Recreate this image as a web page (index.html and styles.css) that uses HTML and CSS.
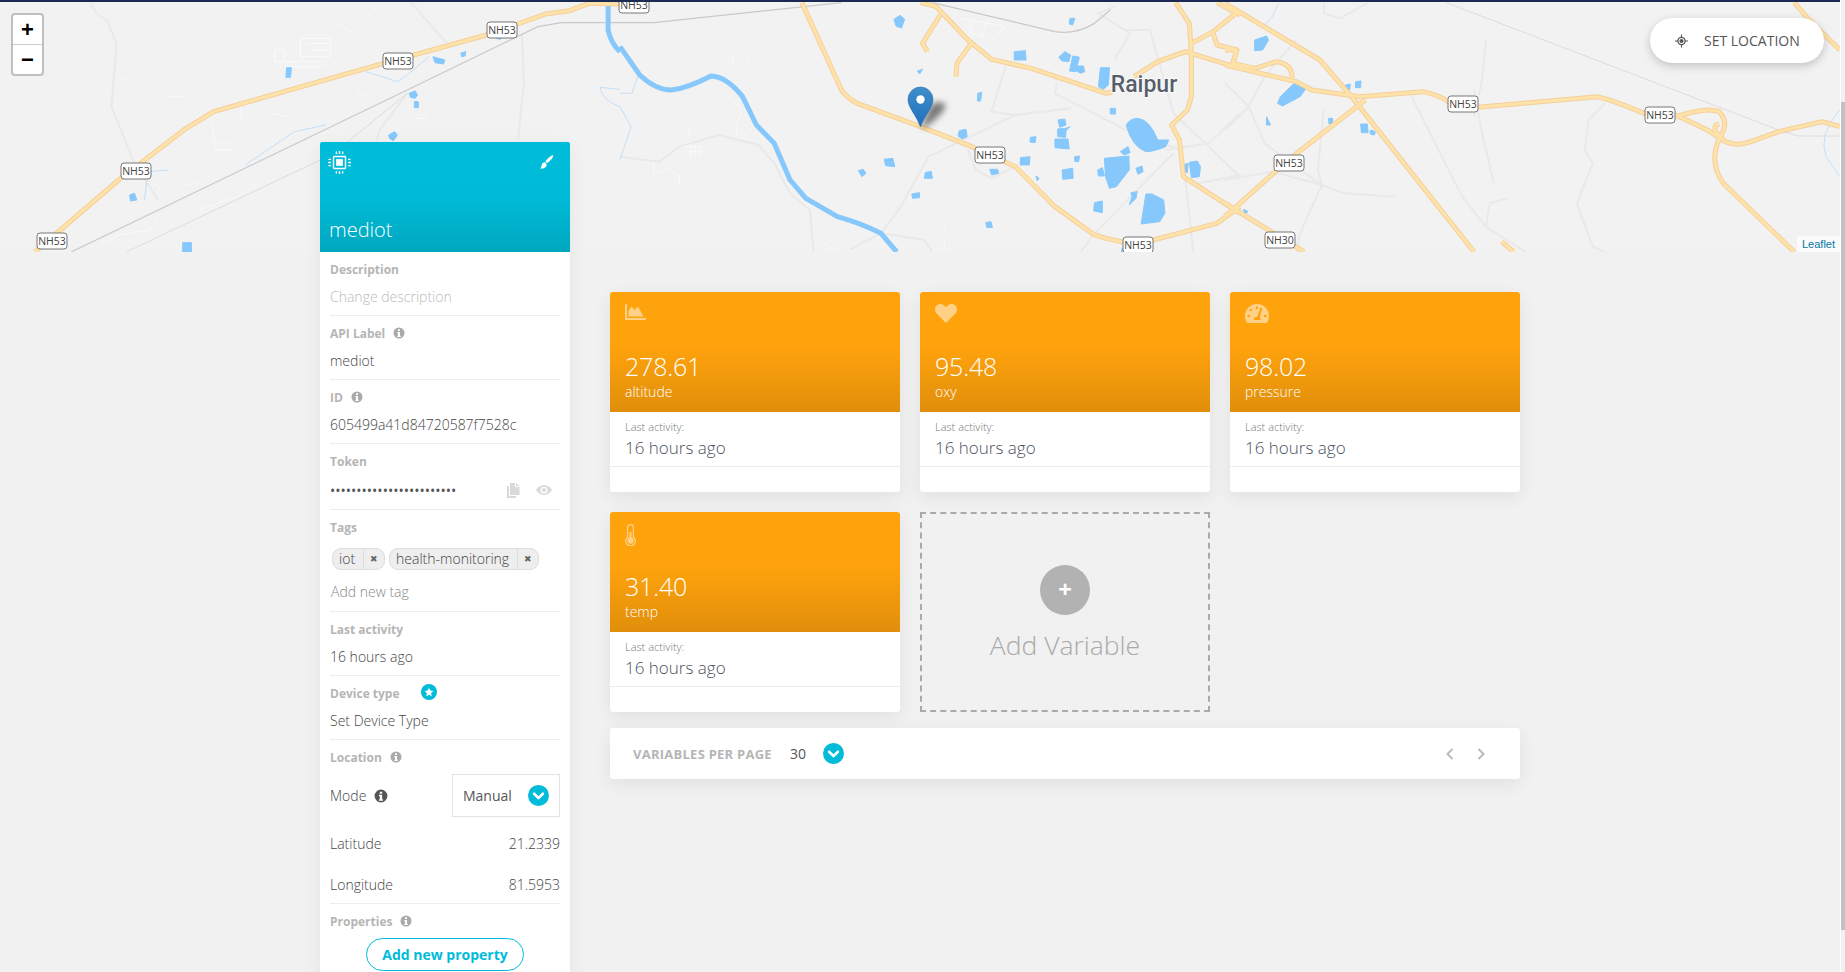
FILE: index.html
```html
<!DOCTYPE html>
<html lang="en">
<head>
    <meta charset="UTF-8">
    <meta name="viewport" content="width=device-width, initial-scale=1.0">
    <title>mediot</title>
    <link rel="stylesheet" href="styles.css">
</head>
<body>

<!-- Shared icons -->
<svg class="icon-defs" aria-hidden="true">
    <symbol id="i-info" viewBox="0 0 24 24">
        <path fill-rule="evenodd" d="M12 1a11 11 0 1 0 0 22a11 11 0 0 0 0-22zM10 4.500h4v3.500h-4zM8.500 10h5.500v7.500h1.500v2.500h-7v-2.500h1.500v-5h-1.500z"/>
    </symbol>
    <symbol id="i-chevron" viewBox="0 0 24 24">
        <circle cx="12" cy="12" r="12" fill="#00bcd9"/>
        <path d="M7 10l5 5 5-5" fill="none" stroke="#fff" stroke-width="3" stroke-linecap="round" stroke-linejoin="round"/>
    </symbol>
    <g id="map-roads">
        <g transform="scale(.3954 .3333)">
            <path d="M88 756L300 540L465 390L540 335L970 190L1230 105L1380 42L1440 32L1490 10L1568 12"/>
        </g>
        <g transform="translate(620 0) scale(.3954 .3333)">
            <path d="M460 8L560 270Q575 295 600 310L760 380L890 440L1000 500L1100 620L1200 705Q1250 725 1310 732L1510 670L1568 620"/>
            <path d="M760 8L800 20L880 120L940 178L1040 205L1230 280L1245 276"/>
            <path d="M810 45L765 130L778 155"/>
            <path d="M888 130L852 190L850 230"/>
            <path d="M1405 8L1440 70L1445 160L1445 290L1435 330L1395 375L1415 420L1425 530L1568 640"/>
            <path d="M1300 230L1360 185L1430 155L1568 205"/>
            <path d="M1445 130L1500 95L1568 30"/>
            <path d="M1510 8L1568 45"/>
            <path d="M1500 100L1510 135L1560 150L1550 190"/>
        </g>
        <g transform="translate(1225 0) scale(.3954 .3333)">
            <path d="M0 10L240 180L320 290L630 756"/>
            <path d="M0 195L180 245L220 270L340 290L500 275Q540 285 565 305L640 322L940 290Q970 295 1060 340L1140 345L1220 390L1265 425Q1295 440 1330 425L1400 395L1510 365L1555 380"/>
            <path d="M355 300L160 480L0 650"/>
            <path d="M1140 350Q1220 320 1250 335Q1275 370 1255 405Q1220 480 1260 550L1440 756"/>
            <path d="M1250 372Q1235 375 1240 395L1262 420"/>
            <path d="M1440 8L1470 50L1555 150"/>
            <path d="M0 610L200 756"/>
            <path d="M0 150L30 150L20 190L75 205L130 185Q170 190 170 235"/>
            <path d="M700 725L730 756"/>
        </g>
    </g>
</svg>

<div class="topbar"></div>

<!-- Map -->
<div class="map">
    <svg class="map-canvas" viewBox="0 2 1840 250">
        <!-- thin white tracks and minor roads -->
        <g class="minor" transform="scale(.3954 .3333)">
            <path d="M230 8Q235 40 270 60L295 130L282 320L340 490L400 600"/>
            <path d="M1040 8L1130 130"/>
            <path d="M1320 100L1325 250L1310 420"/>
            <path d="M1030 280L960 390L930 510"/>
        </g>
        <g class="minor" transform="translate(620 0) scale(.3954 .3333)">
            <path d="M0 470L100 485L150 440L250 405L350 435L390 490L430 580L480 630L490 756"/>
            <path d="M660 700L710 620L780 470L850 430L1000 345L1140 325"/>
            <path d="M975 200L940 335L1000 345"/>
            <path d="M1105 250L1100 280L1280 390L1420 450"/>
            <path d="M1280 90L1340 90L1400 340L1568 530"/>
            <path d="M1250 20L1210 40L1290 100L1250 180"/>
            <path d="M880 450L900 510L940 535L1000 500"/>
            <path d="M1400 460L1200 700L1165 756"/>
            <path d="M1430 540L1450 756"/>
            <path d="M1465 550L1568 525"/>
            <path d="M1568 340L1490 430L1380 450"/>
            <path d="M580 750L660 700L770 720L790 756"/>
        </g>
        <g class="minor" transform="translate(1225 0) scale(.3954 .3333)">
            <path d="M250 8L250 40L290 55L360 10"/>
            <path d="M0 250L60 320L0 390"/>
            <path d="M250 325L235 510L245 555L190 700L180 756"/>
            <path d="M0 540L120 515L245 555L300 580L430 590"/>
            <path d="M470 285L600 590L660 680L760 756"/>
            <path d="M630 270L650 400L680 550"/>
            <path d="M660 120L650 240L630 350"/>
            <path d="M960 310L920 360L910 450L930 490L890 610L930 740L960 756"/>
            <path d="M660 680L670 610L715 595"/>
            <path d="M180 120L100 230L60 320L100 430L250 560"/>
        </g>
        <g class="white-track" transform="scale(.3954 .3333)">
            <path d="M695 150H720V185H695ZM760 115H835V170H760ZM725 185H820V200H725ZM775 130H840M785 150H840"/>
            <path d="M535 360L545 450H585M545 428H590M610 320V360M685 340L730 350"/>
            <path d="M430 290H460L480 268M300 230L335 250M900 260L905 280L930 285M1045 355H1070L1085 330"/>
            <path d="M395 490L410 520M460 560L505 545M395 550L410 575M920 55L950 30M850 65L890 100"/>
            <path d="M260 730L300 705L380 690L400 650M500 630L600 590L660 545"/>
        </g>
        <g class="white-track" transform="translate(620 0) scale(.3954 .3333)">
            <path d="M160 440H215M170 455H210M180 440V475M190 440V470M200 440V470"/>
            <path d="M85 490V520L120 505L150 530V555M285 165V200M325 180V195M720 205L740 180"/>
            <path d="M255 275L310 330L295 370V410M310 410L330 385M175 385V410"/>
            <path d="M860 55L975 80L930 135M880 95L920 110M895 60L885 95M925 70L915 110"/>
            <path d="M985 640L1000 665M510 720L540 750M600 690L620 700M820 665V690M820 715V750"/>
        </g>

        <!-- railway lines -->
        <g class="rail" transform="scale(.3954 .3333)">
            <path d="M180 756L1030 270L1360 80L1420 68H1568"/>
        </g>
        <g class="rail-soft" transform="scale(.3954 .3333)">
            <path d="M320 756L810 480"/>
            <path d="M880 425L1030 280"/>
        </g>
        <g class="rail" transform="translate(620 0) scale(.3954 .3333)">
            <path d="M0 68H85L560 8"/>
            <path d="M790 8L1100 95Q1150 105 1200 70L1240 30"/>
        </g>
        <g class="rail-soft" transform="translate(1225 0) scale(.3954 .3333)">
            <path d="M560 8L1400 390L1450 408H1555"/>
        </g>

        <!-- thin streams -->
        <g class="stream" transform="scale(.3954 .3333)">
            <path d="M925 215L1005 245L1030 225L1085 170"/>
            <path d="M620 495L745 395L825 375"/>
            <path d="M365 600L375 515L425 510"/>
            <path d="M1568 320Q1520 300 1518 262L1568 268"/>
        </g>
        <g class="stream" transform="translate(620 0) scale(.3954 .3333)">
            <path d="M0 320L28 380L0 480"/>
            <path d="M45 230L30 280H0"/>
        </g>
        <g class="stream" transform="translate(1225 0) scale(.3954 .3333)">
            <path d="M1555 330Q1500 400 1520 470L1555 530"/>
            <path d="M135 10L120 50L100 75"/>
        </g>

        <!-- main river -->
        <g class="river" transform="scale(.3954 .3333)">
            <path d="M1538 8L1538 90Q1545 130 1568 155"/>
        </g>
        <g class="river" transform="translate(620 0) scale(.3954 .3333)">
            <path d="M0 140L50 225Q90 270 130 270Q170 265 230 228Q270 230 310 290L345 375L390 430L430 540L470 595L550 650Q610 670 660 700L700 756"/>
        </g>

        <!-- lakes and ponds -->
        <g class="water" transform="scale(.3954 .3333)">
            <path d="M725 203H737L735 232H723Z"/>
            <path d="M1095 170L1125 180L1122 192L1100 188Z"/>
            <path d="M1165 160L1178 155L1176 168L1168 170Z"/>
            <path d="M1035 280L1050 273L1056 285L1050 295L1038 292Z"/>
            <path d="M1048 305H1058V323H1048Z"/>
            <path d="M983 405L998 395L1005 405L995 422L985 415Z"/>
            <path d="M328 585L340 580L346 600L330 603Z"/>
            <path d="M462 728H484V756H462Z"/>
            <path d="M1255 105H1272L1265 118L1255 115Z"/>
        </g>
        <g class="water" transform="translate(620 0) scale(.3954 .3333)">
            <path d="M693 58L708 46L720 58L712 84L698 78Z"/>
            <path d="M997 155L1025 152L1027 180L997 180Z"/>
            <path d="M1110 172L1125 155L1140 165L1135 185L1118 183Z"/>
            <path d="M1145 168L1162 172L1152 215L1137 213Z"/>
            <path d="M1155 198H1172L1175 215L1165 220L1153 212Z"/>
            <path d="M1138 55H1150L1145 75L1136 72Z"/>
            <path d="M1215 203H1238L1235 255L1222 268L1210 260Z"/>
            <path d="M905 280L915 277L912 303H904Z"/>
            <path d="M752 213L765 208L758 222Z"/>
            <path d="M1240 325H1253V342H1240Z"/>
            <path d="M1108 360L1125 357L1128 375L1112 382Z"/>
            <path d="M1107 387L1128 385L1138 380L1128 392L1127 412L1107 410Z"/>
            <path d="M1100 417H1133L1136 447L1100 443Z"/>
            <path d="M1038 412L1052 410L1050 428L1037 426Z"/>
            <path d="M858 392L875 388L878 410L865 417L855 408Z"/>
            <path d="M1280 375Q1290 355 1310 355Q1340 360 1360 420L1388 420L1380 440Q1350 455 1330 455Q1295 440 1280 375Z"/>
            <path d="M1265 455L1285 440L1290 458L1275 465Z"/>
            <path d="M1225 475L1287 468L1288 510L1255 560L1238 565L1228 530Z"/>
            <path d="M1208 510L1220 503L1225 528L1210 528Z"/>
            <path d="M1305 505L1320 498L1323 515L1310 523Z"/>
            <path d="M1150 470L1162 468L1160 485L1150 484Z"/>
            <path d="M1013 473L1037 470L1035 495L1012 495Z"/>
            <path d="M935 508H955L958 520L940 525Z"/>
            <path d="M1118 510L1145 505L1146 535L1120 538Z"/>
            <path d="M1052 528L1060 535L1055 542Z"/>
            <path d="M668 478L690 475L695 500L672 497Z"/>
            <path d="M603 512L615 508L622 520L612 530Z"/>
            <path d="M772 518L787 514L790 535H770Z"/>
            <path d="M738 582L757 578L758 593L740 595Z"/>
            <path d="M925 668L938 665L942 682L928 683Z"/>
            <path d="M1200 608L1220 603V638L1198 633Z"/>
            <path d="M1292 578L1308 575L1305 595L1288 615L1295 590Z"/>
            <path d="M1330 582H1345L1375 600L1378 640L1365 665L1318 672Z"/>
            <path d="M1425 495L1437 490L1435 518L1427 515Z"/>
            <path d="M1440 487L1460 483L1468 500L1465 530L1445 533Z"/>
            <path d="M1270 745H1290L1285 756H1268Z"/>
        </g>
        <g class="water" transform="translate(1225 0) scale(.3954 .3333)">
            <path d="M75 120L105 108L110 120L95 150L75 152Z"/>
            <path d="M140 290L175 250L205 265L190 290L145 318L133 310Z"/>
            <path d="M305 255L317 253L315 270L307 270Z"/>
            <path d="M330 245L344 243L343 263H330Z"/>
            <path d="M105 350L115 375H105Z"/>
            <path d="M262 355H272V372H263Z"/>
            <path d="M343 372H360L362 398H345Z"/>
            <path d="M368 390L380 395L378 405L367 402Z"/>
            <path d="M47 628L58 635L50 642Z"/>
        </g>

        <!-- highways, drawn twice for the casing -->
        <use href="#map-roads" class="road-case"/>
        <use href="#map-roads" class="road-fill"/>

        <!-- highway shields -->
        <g class="shield"><rect x="37" y="233" width="30" height="16" rx="3"/><text x="52" y="245">NH53</text></g>
        <g class="shield"><rect x="121" y="163" width="30" height="16" rx="3"/><text x="136" y="175">NH53</text></g>
        <g class="shield"><rect x="383" y="53" width="30" height="16" rx="3"/><text x="398" y="65">NH53</text></g>
        <g class="shield"><rect x="487" y="22" width="30" height="16" rx="3"/><text x="502" y="34">NH53</text></g>
        <g class="shield"><rect x="619" y="-3" width="30" height="16" rx="3"/><text x="634" y="9">NH53</text></g>
        <g class="shield"><rect x="975" y="147" width="30" height="16" rx="3"/><text x="990" y="159">NH53</text></g>
        <g class="shield"><rect x="1123" y="237" width="30" height="16" rx="3"/><text x="1138" y="249">NH53</text></g>
        <g class="shield"><rect x="1274" y="155" width="30" height="16" rx="3"/><text x="1289" y="167">NH53</text></g>
        <g class="shield"><rect x="1265" y="232" width="30" height="16" rx="3"/><text x="1280" y="244">NH30</text></g>
        <g class="shield"><rect x="1448" y="96" width="30" height="16" rx="3"/><text x="1463" y="108">NH53</text></g>
        <g class="shield"><rect x="1645" y="107" width="30" height="16" rx="3"/><text x="1660" y="119">NH53</text></g>

        <text class="city" x="1144" y="92">Raipur</text>

        <!-- location marker with its shadow -->
        <defs>
            <linearGradient id="pin-grad" x1="0" y1="0" x2="0" y2="1">
                <stop offset="0" stop-color="#3f8fcb"/>
                <stop offset="1" stop-color="#1f6fbd"/>
            </linearGradient>
            <filter id="pin-blur" x="-60%" y="-60%" width="220%" height="220%">
                <feGaussianBlur stdDeviation="3"/>
            </filter>
        </defs>
        <path class="pin-shadow" d="M921 127L930 106Q940 98 946 106Q942 115 926 127Z" filter="url(#pin-blur)"/>
        <path d="M920.500 127C917 116 908 108 908 99.500A12.500 12.500 0 1 1 933 99.500C933 108 924 116 920.500 127Z" fill="url(#pin-grad)" stroke="#2a6ea8" stroke-width=".6"/>
        <circle cx="920.500" cy="99.500" r="4.200" fill="#fff"/>
    </svg>

    <div class="zoom-control">
        <div class="zoom-btn">+</div>
        <div class="zoom-btn">&minus;</div>
    </div>

    <div class="set-location">
        <svg class="set-location-icon" viewBox="0 0 24 24">
            <path fill="#555" d="M11 0h2v4.200a8 8 0 0 1 6.800 6.800H24v2h-4.200a8 8 0 0 1-6.800 6.800V24h-2v-4.200A8 8 0 0 1 4.200 13H0v-2h4.200A8 8 0 0 1 11 4.200zM12 6.500a5.500 5.500 0 1 0 0 11a5.500 5.500 0 0 0 0-11z"/>
            <circle cx="12" cy="12" r="3.800" fill="#555"/>
        </svg>
        SET LOCATION
    </div>

    <div class="attribution">Leaflet</div>
</div>

<div class="content">
    <!-- Device sidebar -->
    <aside class="device-card">
        <div class="device-head">
            <div class="device-icons">
                <svg class="chip-icon" viewBox="0 0 24 24" fill="#fff">
                    <path fill-rule="evenodd" d="M6.500 5h11A1.500 1.500 0 0 1 19 6.500v11a1.500 1.500 0 0 1-1.500 1.500h-11A1.500 1.500 0 0 1 5 17.500v-11A1.500 1.500 0 0 1 6.500 5zM6.500 6.500v11h11v-11z"/>
                    <rect x="8.500" y="8.500" width="7" height="7"/>
                    <path d="M8 0.500h1.500v2.500h-1.500zM11.250 0h1.500v3h-1.500zM14.500 0.500h1.500v2.500h-1.500zM8 21h1.500v2.500h-1.500zM11.250 21h1.500v3h-1.500zM14.500 21h1.500v2.500h-1.500zM0.500 8h2.500v1.500h-2.500zM0 11.250h3v1.500h-3zM0.500 14.500h2.500v1.500h-2.500zM21 8h2.500v1.500h-2.500zM21 11.250h3v1.500h-3zM21 14.500h2.500v1.500h-2.500z"/>
                </svg>
                <svg class="brush-icon" viewBox="0 0 16 17" fill="#fff">
                    <path d="M15.500 0.300c.5.500-.5 3-2.500 5.200c-1.500 1.700-3 3.200-4.300 3.900c-.4-1-1.100-1.700-2.100-2.100c.7-1.300 2.200-2.800 3.900-4.300c2.200-2 4.500-3.200 5-2.700zM5.800 8.200c1.300.3 2.200 1.300 2.400 2.500c.2 3-3 5-7.800 4.700c1.500-.8 1.700-1.800 1.900-3.200c.3-2.500 1.800-4 3.500-4z"/>
                </svg>
            </div>
            <div class="device-name">mediot</div>
        </div>

        <div class="field">
            <div class="field-label">Description</div>
            <div class="field-value placeholder">Change description</div>
        </div>
        <div class="field">
            <div class="field-label">API Label <svg class="info"><use href="#i-info"/></svg></div>
            <div class="field-value">mediot</div>
        </div>
        <div class="field">
            <div class="field-label">ID <svg class="info"><use href="#i-info"/></svg></div>
            <div class="field-value">605499a41d84720587f7528c</div>
        </div>
        <div class="field field-token">
            <div class="field-label">Token</div>
            <div class="token-row">
                <span class="token-dots">&bull;&bull;&bull;&bull;&bull;&bull;&bull;&bull;&bull;&bull;&bull;&bull;&bull;&bull;&bull;&bull;&bull;&bull;&bull;&bull;&bull;&bull;&bull;&bull;</span>
                <svg class="copy-icon" viewBox="0 0 14 15" fill="#d9d9d9">
                    <path d="M3 0h5v4h4.500v8H3zM9 0l3.500 3H9zM0 3h2v10h7v2H0z"/>
                </svg>
                <svg class="eye-icon" viewBox="0 0 16 10">
                    <path fill="#d9d9d9" fill-rule="evenodd" d="M8 0c3.500 0 6.300 2.200 8 5c-1.700 2.800-4.500 5-8 5s-6.300-2.200-8-5c1.700-2.800 4.500-5 8-5zM8 1.500a3.500 3.500 0 1 0 0 7a3.500 3.500 0 0 0 0-7z"/>
                    <circle cx="8" cy="5" r="2" fill="#d9d9d9"/>
                </svg>
            </div>
        </div>
        <div class="field field-tags">
            <div class="field-label">Tags</div>
            <div class="tag-list">
                <span class="tag"><span class="tag-text">iot</span><span class="tag-x">&#10006;</span></span>
                <span class="tag"><span class="tag-text">health-monitoring</span><span class="tag-x">&#10006;</span></span>
            </div>
            <div class="tag-input">Add new tag</div>
        </div>
        <div class="field">
            <div class="field-label">Last activity</div>
            <div class="field-value">16 hours ago</div>
        </div>
        <div class="field">
            <div class="field-label">Device type
                <svg class="star-badge" viewBox="0 0 24 24">
                    <circle cx="12" cy="12" r="12" fill="#00bcd9"/>
                    <path fill="#fff" d="M12 5.500l2 4.300 4.700.6-3.500 3.200.9 4.700-4.100-2.300-4.100 2.300.9-4.700-3.500-3.200 4.700-.6z"/>
                </svg>
            </div>
            <div class="field-value">Set Device Type</div>
        </div>
        <div class="field field-location">
            <div class="field-label">Location <svg class="info"><use href="#i-info"/></svg></div>
            <div class="loc-row">
                <span class="loc-mode">Mode <svg class="info info-dark"><use href="#i-info"/></svg></span>
                <div class="mode-select">Manual <svg class="select-chevron"><use href="#i-chevron"/></svg></div>
            </div>
            <div class="coord-row"><span>Latitude</span><span>21.2339</span></div>
            <div class="coord-row"><span>Longitude</span><span>81.5953</span></div>
        </div>
        <div class="field field-last">
            <div class="field-label">Properties <svg class="info"><use href="#i-info"/></svg></div>
            <button class="add-property">Add new property</button>
        </div>
    </aside>

    <!-- Variables -->
    <main class="variables">
        <div class="var-grid">
            <div class="var-card">
                <div class="var-head">
                    <svg class="var-icon" viewBox="0 0 21 16" width="21" height="16">
                        <path d="M0 0h2v14h19v2H0zM3.500 12.500V7l3-4.500 3 3.500 3.500-3.500 5.500 10z"/>
                    </svg>
                    <div class="var-value">278.61</div>
                    <div class="var-name">altitude</div>
                </div>
                <div class="var-body">
                    <div class="var-activity">Last activity:</div>
                    <div class="var-time">16 hours ago</div>
                </div>
            </div>
            <div class="var-card">
                <div class="var-head">
                    <svg class="var-icon" viewBox="0 0 22 19" width="22" height="19">
                        <path d="M11 19L1.800 9.800C-.6 7.400-.6 3.700 1.500 1.600C3.700-.5 7.300-.5 9.500 1.700L11 3.200L12.500 1.700C14.700-.5 18.300-.5 20.500 1.600C22.600 3.700 22.600 7.400 20.200 9.800z"/>
                    </svg>
                    <div class="var-value">95.48</div>
                    <div class="var-name">oxy</div>
                </div>
                <div class="var-body">
                    <div class="var-activity">Last activity:</div>
                    <div class="var-time">16 hours ago</div>
                </div>
            </div>
            <div class="var-card">
                <div class="var-head">
                    <svg class="var-icon" viewBox="0 0 24 19" width="24" height="19">
                        <path fill-rule="evenodd" d="M12 0C5.400 0 0 5.400 0 12c0 2.500.7 4.800 2 6.500q.4.500 1 .5h18q.6 0 1-.5c1.300-1.700 2-4 2-6.500C24 5.400 18.600 0 12 0zM11 2.500h2v2.500h-2zM5.500 4.500l1.700 1.500-1.400 1.500-1.600-1.600zM2.500 11h2.500v2h-2.500zM19 11h2.500v2H19zM15.500 3.500l1.700.6-2.400 9.400c.8.700 1 1.500 1 2.500H8.500c0-1.800 1.600-3.400 3.800-3.300z"/>
                    </svg>
                    <div class="var-value">98.02</div>
                    <div class="var-name">pressure</div>
                </div>
                <div class="var-body">
                    <div class="var-activity">Last activity:</div>
                    <div class="var-time">16 hours ago</div>
                </div>
            </div>
            <div class="var-card">
                <div class="var-head">
                    <svg class="var-icon" viewBox="0 0 11 22" width="11" height="22">
                        <path fill-rule="evenodd" d="M5.500 0A3.500 3.500 0 0 1 9 3.500v9.300a5.500 5.500 0 1 1-7 0V3.500A3.500 3.500 0 0 1 5.500 0zM5.500 1.200A2.300 2.300 0 0 0 3.200 3.500v9.900a4.300 4.300 0 1 0 4.600 0V3.500A2.300 2.300 0 0 0 5.500 1.200z"/>
                        <circle cx="5.500" cy="16.500" r="3.200"/>
                        <rect x="4.500" y="8" width="2" height="7"/>
                    </svg>
                    <div class="var-value">31.40</div>
                    <div class="var-name">temp</div>
                </div>
                <div class="var-body">
                    <div class="var-activity">Last activity:</div>
                    <div class="var-time">16 hours ago</div>
                </div>
            </div>
            <div class="add-var">
                <div class="add-var-btn">+</div>
                <div class="add-var-text">Add Variable</div>
            </div>
        </div>

        <div class="var-toolbar">
            <span class="per-page-label">VARIABLES PER PAGE</span>
            <span class="per-page-value">30</span>
            <svg class="per-page-chevron"><use href="#i-chevron"/></svg>
            <div class="pager">
                <svg viewBox="0 0 10 14" width="10" height="14"><path d="M7.500 2L2.500 7l5 5"/></svg>
                <svg viewBox="0 0 10 14" width="10" height="14"><path d="M2.500 2l5 5-5 5"/></svg>
            </div>
        </div>
    </main>
</div>

<div class="scrollbar"><div class="scrollbar-thumb"></div></div>

</body>
</html>
```

FILE: styles.css
```css
html, body {
    height: 100%;
    overflow: hidden;
}
body {
    margin: 0;
    background-color: #f1f1f1;
    font-family: "Open Sans", Arial, sans-serif;
    color: #555;
}
.icon-defs {
    display: none;
}
.topbar {
    height: 2px;
    background-color: #1a2a52;
}

/* Map */
.map {
    position: relative;
    width: 1840px;
    height: 250px;
    overflow: hidden;
    background-color: #f2f2f2;
}
.map-canvas {
    display: block;
    width: 1840px;
    height: 250px;
}
.map-canvas path,
#map-roads path {
    vector-effect: non-scaling-stroke;
}
.minor path {
    fill: none;
    stroke: #e9e9e9;
    stroke-width: 2;
}
.white-track path {
    fill: none;
    stroke: #fafafa;
    stroke-width: 1;
}
.rail path {
    fill: none;
    stroke: #c9c9c9;
    stroke-width: 1.300;
}
.rail-soft path {
    fill: none;
    stroke: #dcdcdc;
    stroke-width: 1;
}
.stream path {
    fill: none;
    stroke: #c4dff6;
    stroke-width: 1;
}
.river path {
    fill: none;
    stroke: #86c8fc;
    stroke-width: 5;
    stroke-linejoin: round;
}
.water path {
    fill: #86c8fc;
    stroke: #86c8fc;
    stroke-width: 1;
    stroke-linejoin: round;
}
.road-case,
.road-fill {
    fill: none;
    stroke-linejoin: round;
}
.road-case {
    stroke: #f5cf9c;
    stroke-width: 5;
}
.road-fill {
    stroke: #fde2a9;
    stroke-width: 3;
}
.shield rect {
    fill: #fff;
    stroke: #777;
    stroke-width: 1;
}
.shield text {
    font-family: "Open Sans", sans-serif;
    font-size: 10.500px;
    fill: #444;
    text-anchor: middle;
}
.city {
    font-family: Roboto, sans-serif;
    font-size: 23px;
    font-weight: 500;
    fill: #575e6b;
    stroke: #fff;
    stroke-width: 1.500px;
    paint-order: stroke;
    text-anchor: middle;
}
.pin-shadow {
    fill: rgba(0, 0, 0, 0.5);
}
.zoom-control {
    position: absolute;
    top: 11px;
    left: 11px;
    width: 29px;
    border: 2px solid rgba(0, 0, 0, 0.25);
    border-radius: 4px;
    background: #fff;
}
.zoom-btn {
    height: 29px;
    line-height: 29px;
    text-align: center;
    font-family: "Liberation Sans", Arial, sans-serif;
    font-size: 22px;
    font-weight: bold;
    color: #000;
}
.zoom-btn:first-child {
    border-bottom: 1px solid #ccc;
}
.set-location {
    position: absolute;
    top: 16px;
    left: 1650px;
    width: 174px;
    height: 45px;
    display: flex;
    align-items: center;
    padding-left: 25px;
    box-sizing: border-box;
    background: #fff;
    border-radius: 23px;
    box-shadow: 0 3px 10px rgba(0, 0, 0, 0.2);
    font-size: 14px;
    color: #555;
}
.set-location-icon {
    width: 13px;
    height: 14px;
    margin-right: 16px;
}
.attribution {
    position: absolute;
    right: 0;
    bottom: 0;
    padding: 0 5px;
    background: rgba(255, 255, 255, 0.7);
    font-family: "Liberation Sans", Arial, sans-serif;
    font-size: 11px;
    line-height: 16px;
    color: #0078a8;
}

/* Page below the map */
.content {
    display: flex;
    align-items: flex-start;
    padding-left: 320px;
}

/* Device sidebar */
.device-card {
    position: relative;
    width: 250px;
    margin-top: -110px;
    background: #fff;
    border-radius: 2px 2px 0 0;
    box-shadow: 0 5px 20px rgba(0, 0, 0, 0.06);
}
.device-head {
    height: 110px;
    display: flex;
    flex-direction: column;
    justify-content: space-between;
    padding: 9px 10px 9px 8px;
    box-sizing: border-box;
    background: linear-gradient(to bottom, #00bcd9 0%, #00bbd7 50%, #00a7bf 100%);
    border-radius: 2px 2px 0 0;
    color: #fff;
}
.device-icons {
    display: flex;
    justify-content: space-between;
    align-items: flex-start;
}
.chip-icon {
    width: 23px;
    height: 23px;
}
.brush-icon {
    width: 15px;
    height: 15px;
    margin-top: 4px;
    margin-right: 6px;
}
.device-name {
    padding-left: 1px;
    font-size: 20px;
    font-weight: 300;
    line-height: 26px;
}
.field {
    margin: 0 10px;
    padding: 8px 0;
    border-bottom: 1px solid #ececec;
}
.field-label {
    display: flex;
    align-items: center;
    height: 18px;
    font-size: 12px;
    font-weight: 700;
    color: #b5b5b5;
}
.info {
    width: 12px;
    height: 12px;
    margin-left: 8px;
    fill: #aaa;
}
.info-dark {
    fill: #555;
    width: 14px;
    height: 14px;
    margin-left: 8px;
}
.field-value {
    margin-top: 9px;
    font-size: 14px;
    font-weight: 300;
    line-height: 20px;
    color: #444;
}
.placeholder {
    color: #bbb;
}
.token-row {
    display: flex;
    align-items: center;
    height: 22px;
    margin-top: 9px;
}
.token-dots {
    flex: 1;
    font-size: 14px;
    color: #555;
}
.copy-icon {
    width: 14px;
    height: 15px;
    margin-right: 15px;
}
.eye-icon {
    width: 16px;
    height: 10px;
    margin-right: 8px;
}
.field-tags {
    padding-bottom: 9px;
}
.tag-list {
    display: flex;
    gap: 4px;
    margin: 12px 0 0 2px;
}
.tag {
    display: flex;
    height: 22px;
    background: #eee;
    border: 1px solid #ddd;
    border-radius: 9px;
    box-sizing: border-box;
    font-size: 14px;
    font-weight: 300;
    line-height: 20px;
    color: #444;
}
.tag-text {
    padding: 0 8px 0 6px;
    border-right: 1px solid #ddd;
}
.tag-x {
    width: 20px;
    font-size: 9px;
    text-align: center;
    color: #666;
}
.tag-input {
    margin: 12px 0 0 1px;
    font-size: 14px;
    font-weight: 300;
    line-height: 20px;
    color: #888;
}
.star-badge {
    width: 16px;
    height: 16px;
    margin-left: 21px;
    margin-top: -3px;
}
.loc-row {
    display: flex;
    align-items: center;
    justify-content: space-between;
    margin-top: 8px;
    font-size: 14px;
    font-weight: 300;
    color: #444;
}
.loc-mode {
    display: flex;
    align-items: center;
}
.mode-select {
    display: flex;
    align-items: center;
    justify-content: space-between;
    width: 108px;
    height: 43px;
    padding: 0 10px;
    box-sizing: border-box;
    border: 1px solid #e2e2e2;
    font-weight: 400;
    color: #555;
}
.select-chevron {
    width: 21px;
    height: 21px;
}
.coord-row {
    display: flex;
    justify-content: space-between;
    margin-top: 21px;
    font-size: 14px;
    font-weight: 300;
    line-height: 20px;
    color: #444;
}
.coord-row:nth-child(3) {
    margin-top: 17px;
}
.field-last {
    border-bottom: 0;
}
.add-property {
    display: block;
    width: 158px;
    height: 33px;
    margin: 8px auto 0;
    background: #fff;
    border: 1px solid #00bcd9;
    border-radius: 17px;
    font-family: "Open Sans", Arial, sans-serif;
    font-size: 14px;
    font-weight: 700;
    color: #00bcd9;
}

/* Variable cards */
.variables {
    width: 910px;
    margin-left: 40px;
    padding-top: 40px;
}
.var-grid {
    display: grid;
    grid-template-columns: repeat(3, 290px);
    grid-auto-rows: 200px;
    gap: 20px;
}
.var-card {
    background: #fff;
    border-radius: 3px;
    overflow: hidden;
    box-shadow: 0 5px 18px rgba(0, 0, 0, 0.07);
}
.var-head {
    display: flex;
    flex-direction: column;
    height: 120px;
    padding: 12px 15px 10px;
    box-sizing: border-box;
    background: linear-gradient(to bottom, #ffa30d 0%, #ffa30d 45%, #e08e0b 100%);
    color: #fff;
}
.var-icon {
    fill: #fff;
    opacity: 0.5;
    margin-bottom: auto;
}
.var-value {
    margin-top: -1px;
    padding-bottom: 1px;
    font-size: 25px;
    font-weight: 300;
    letter-spacing: -0.2px;
    line-height: 30px;
}
.var-name {
    font-size: 14px;
    font-weight: 300;
    line-height: 20px;
}
.var-body {
    height: 55px;
    padding: 6px 15px 0;
    box-sizing: border-box;
    border-bottom: 1px solid #ececec;
}
.var-activity {
    font-size: 11px;
    font-weight: 300;
    line-height: 17px;
    color: #777;
}
.var-time {
    margin-top: 1px;
    font-size: 17px;
    font-weight: 300;
    line-height: 24px;
    color: #4a5160;
}
.add-var {
    display: flex;
    flex-direction: column;
    align-items: center;
    padding-top: 51px;
    box-sizing: border-box;
    border: 2px dashed #aaa;
}
.add-var-btn {
    width: 50px;
    height: 50px;
    border-radius: 50%;
    background: #b2b2b2;
    color: #fff;
    font-size: 24px;
    font-weight: 700;
    line-height: 48px;
    text-align: center;
}
.add-var-text {
    margin-top: 13px;
    font-size: 26.500px;
    font-weight: 300;
    line-height: 34px;
    color: #aaa;
}
.var-toolbar {
    display: flex;
    align-items: center;
    height: 51px;
    margin-top: 16px;
    padding: 0 34px 0 23px;
    background: #fff;
    border-radius: 3px;
    box-shadow: 0 5px 18px rgba(0, 0, 0, 0.07);
}
.per-page-label {
    font-size: 13px;
    font-weight: 700;
    letter-spacing: 0.25px;
    color: #b5b5b5;
}
.per-page-value {
    margin-left: 18px;
    font-size: 14px;
    color: #555;
}
.per-page-chevron {
    width: 21px;
    height: 21px;
    margin-left: 17px;
}
.pager {
    display: flex;
    gap: 21px;
    margin-left: auto;
}
.pager path {
    fill: none;
    stroke: #bbb;
    stroke-width: 2;
}

/* Thin browser scrollbar */
.scrollbar {
    position: fixed;
    top: 0;
    right: 0;
    bottom: 0;
    width: 4px;
    background: #f1f1f1;
    border-left: 1px solid #fff;
}
.scrollbar-thumb {
    height: 828px;
    margin-top: 102px;
    background: #c1c1c1;
}
```
